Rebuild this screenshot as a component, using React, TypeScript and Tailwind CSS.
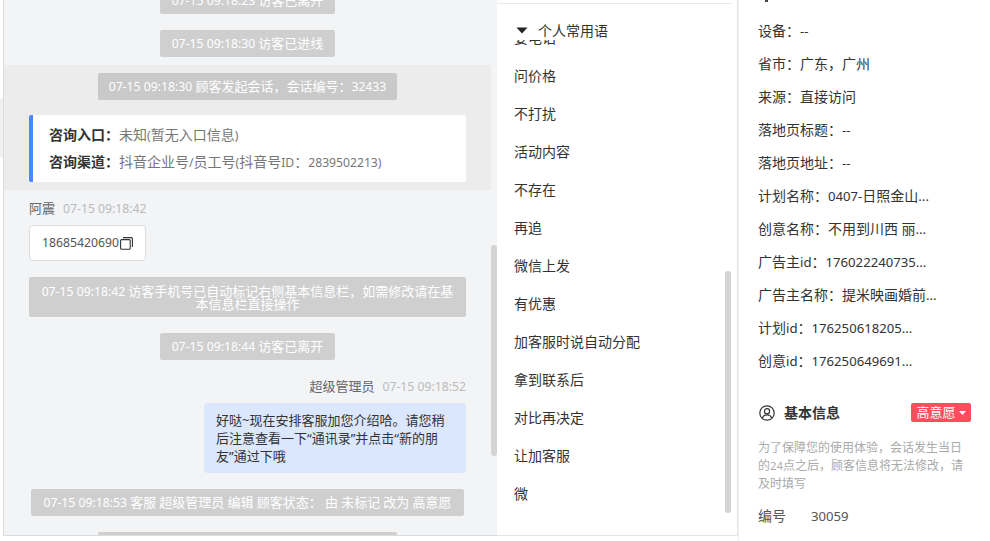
import React from "react";

const font = { fontFamily: '"Noto Sans", "Noto Sans CJK SC", sans-serif' };

// Latin runs of the reference font are a little narrower than the CJK runs around them.
function T({ t }: { t: string }) {
  return (
    <>
      {t.split(/([\x00-\x7f]+)/).map((part, i) =>
        i % 2 === 1 ? (
          <span key={i} className="text-[0.94em]">{part}</span>
        ) : (
          <React.Fragment key={i}>{part}</React.Fragment>
        )
      )}
    </>
  );
}

function CardT({ t }: { t: string }) {
  return (
    <>
      {t.split(/([\x00-\x7f]+)/).map((part, i) =>
        i % 2 === 1 ? (
          <span key={i} className="text-[0.87em]">{part}</span>
        ) : (
          <React.Fragment key={i}>{part}</React.Fragment>
        )
      )}
    </>
  );
}

function Pill({ t, cls = "" }: { t: string; cls?: string }) {
  return (
    <div className={`rounded-[2px] text-white text-center text-[13px] ${cls}`}>
      <T t={t} />
    </div>
  );
}

const phrases = ["要电话", "问价格", "不打扰", "活动内容", "不存在", "再追", "微信上发", "有优惠", "加客服时说自动分配", "拿到联系后", "对比再决定", "让加客服", "微"];
const infos = [
  "设备：--",
  "省市：广东，广州",
  "来源：直接访问",
  "落地页标题：--",
  "落地页地址：--",
  "计划名称：0407-日照金山...",
  "创意名称：不用到川西 丽...",
  "广告主id：176022240735...",
  "广告主名称：提米映画婚前...",
  "计划id：176250618205...",
  "创意id：176250649691...",
];

export default function App() {
  return (
    <div className="w-[990px] h-[541px] flex overflow-hidden bg-white text-[#333]" style={font}>
      <div className="w-[3px] shrink-0 pt-[98px]">
        <div className="h-[59px] bg-[#f0f0f0]" />
      </div>
      <div className="w-[494px] h-[536px] shrink-0 relative border-l border-b border-[#dcdcdc] bg-[#f3f4f6] overflow-hidden">
        <div className="w-[487px] flex flex-col items-center -mt-[13px]">
          <Pill cls="bg-[#cfcfcf] w-[175px] h-[27px] leading-[27px]" t="07-15 09:18:23 访客已离开" />
          <Pill cls="bg-[#cfcfcf] w-[175px] h-[27px] leading-[27px] mt-[16px]" t="07-15 09:18:30 访客已进线" />
          <div className="w-full h-[125px] mt-[8px] bg-[#ececec] flex flex-col items-center pt-[8px]">
            <Pill cls="w-[299px] h-[27px] leading-[27px] bg-[#c9c9c9]" t="07-15 09:18:30 顾客发起会话，会话编号：32433" />
            <div className="w-[437px] h-[67px] mt-[15px] bg-white rounded-[2px] border-l-4 border-[#4a87ff] pl-[16px] pt-[6px] text-[14px] text-[#777]">
              <div className="h-[27px] leading-[27px] overflow-hidden"><span className="font-bold text-[#333]">咨询入口：</span><CardT t="未知(暂无入口信息)" /></div>
              <div className="h-[27px] leading-[27px] overflow-hidden"><span className="font-bold text-[#333]">咨询渠道：</span><CardT t="抖音企业号/员工号(抖音号ID：2839502213)" /></div>
            </div>
          </div>
          <div className="w-[437px] mt-[10px] flex items-center gap-[8px] h-[18px]">
            <span className="text-[13px] text-[#666]">阿震</span>
            <span className="text-[13px] text-[#bbb]"><T t="07-15 09:18:42" /></span>
          </div>
          <div className="w-[437px] mt-[7px]">
            <div className="w-[117px] h-[36px] bg-white border border-[#dcdcdc] rounded-[4px] flex items-center pl-[12px] text-[13px] text-[#555]">
              <T t="18685420690" />
              <svg width="13" height="13" viewBox="0 0 13 13" fill="none" stroke="#333" strokeWidth="1.1" className="shrink-0 ml-px">
                <rect x="0.6" y="2.6" width="9.6" height="9.6" rx="1" />
                <path d="M3 0.6h8.4a1 1 0 0 1 1 1V10" />
              </svg>
            </div>
          </div>
          <Pill cls="bg-[#cfcfcf] w-[437px] h-[40px] mt-[16px] px-[12px] pt-[8px] leading-[13px]" t="07-15 09:18:42 访客手机号已自动标记右侧基本信息栏，如需修改请在基本信息栏直接操作" />
          <Pill cls="bg-[#cfcfcf] w-[175px] h-[27px] leading-[27px] mt-[16px]" t="07-15 09:18:44 访客已离开" />
          <div className="w-[437px] mt-[18px] h-[18px] flex items-center justify-end gap-[8px]">
            <span className="text-[13px] text-[#666]">超级管理员</span>
            <span className="text-[13px] text-[#bbb]"><T t="07-15 09:18:52" /></span>
          </div>
          <div className="w-[437px] mt-[7px] flex justify-end">
            <div className="w-[262px] h-[70px] bg-[#dbe7fd] rounded-[4px] px-[12px] pt-[8px] text-[13px] leading-[18px] text-[#333]">
              好哒~现在安排客服加您介绍哈。请您稍后注意查看一下“通讯录”并点击“新的朋友”通过下哦
            </div>
          </div>
          <Pill cls="bg-[#cfcfcf] w-[433px] h-[27px] leading-[27px] mt-[16px]" t="07-15 09:18:53 客服 超级管理员 编辑 顾客状态： 由 未标记 改为 高意愿" />
          <div className="w-[299px] h-[27px] mt-[16px] shrink-0 rounded-[2px] bg-[#cfcfcf]" />
        </div>
        <div className="absolute left-[487px] top-[245px] w-[6px] h-[211px] rounded-[3px] bg-[#d4d4d4]" />
      </div>

      <div className="w-[241px] h-[536px] shrink-0 relative border-r border-b border-[#e4e4e4] overflow-hidden">
        <div className="w-[234px] mt-[3px] h-px bg-[#e8e8e8]" />
        <div className="pl-[17px] flex flex-col pt-[14px]">
          {phrases.map((p) => (
            <div key={p} className="h-[38px] shrink-0 flex items-center text-[14px] text-[#333]">{p}</div>
          ))}
        </div>
        <div className="absolute left-0 top-[4px] w-[234px] h-[36px] bg-white flex items-end pl-[19px] text-[14px] text-[#333]">
          <svg width="12" height="7" viewBox="0 0 12 7" className="mr-[10px] mb-[6px]">
            <path d="M0.5 0.5h11L6 6.5z" fill="#222" />
          </svg>
          <span className="leading-[18px]">个人常用语</span>
        </div>
        <div className="absolute left-[228px] top-[271px] w-[6px] h-[242px] rounded-[3px] bg-[#d4d4d4]" />
      </div>

      <div className="flex-1 pl-[19px] pr-[19px] overflow-hidden text-[14px] text-[#333] border-l border-[#f0f0f0]">
        <div className="ml-[7px] w-[3px] h-[2px] bg-[#444]" />
        <div className="pt-[12px]">
          {infos.map((t) => (
            <div key={t} className="h-[33px] leading-[33px] whitespace-nowrap"><T t={t} /></div>
          ))}
        </div>
        <div className="mt-[26px] h-[19px] flex items-center justify-between">
          <div className="flex items-center gap-[9px] font-bold text-[#333] ml-px">
            <svg width="16" height="16" viewBox="0 0 16 16" fill="none" stroke="#333" strokeWidth="1.2">
              <circle cx="8" cy="8" r="7.2" />
              <circle cx="8" cy="6.3" r="2.6" />
              <path d="M3.4 13.2c.6-2.2 2.4-3.3 4.6-3.3s4 1.1 4.6 3.3" />
            </svg>
            <span>基本信息</span>
          </div>
          <div className="w-[60px] h-[19px] bg-[#ff4d5e] rounded-[2px] text-white flex items-center justify-center gap-[3px] text-[13px]">
            高意愿
            <svg width="7" height="4" viewBox="0 0 7 4"><path d="M0 0h7L3.5 4z" fill="#fff" /></svg>
          </div>
        </div>
        <div className="mt-[17px] text-[12px] leading-[18px] text-[#aaa]"><T t="为了保障您的使用体验，会话发生当日的24点之后，顾客信息将无法修改，请及时填写" /></div>
        <div className="mt-[12px] flex text-[14px] text-[#555]">
          <span className="w-[53px]">编号</span>
          <span><T t="30059" /></span>
        </div>
      </div>
    </div>
  );
}
